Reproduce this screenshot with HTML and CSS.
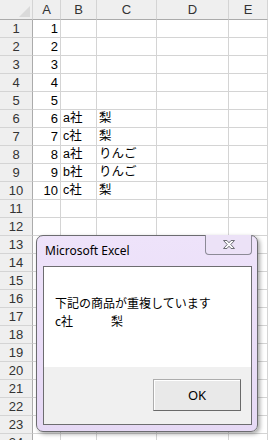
FILE: index.html
```html
<!DOCTYPE html>
<html lang="ja">
<head>
  <meta charset="UTF-8" />
  <title>Microsoft Excel</title>
  <link rel="stylesheet" href="styles.css">
</head>
<body>

  <div class="sheet">
    <div class="hd corner"></div><div class="hd">A</div><div class="hd">B</div><div class="hd">C</div><div class="hd">D</div><div class="hd">E</div>
    <div class="rh">1</div><div class="num">1</div><div></div><div></div><div></div><div></div>
    <div class="rh">2</div><div class="num">2</div><div></div><div></div><div></div><div></div>
    <div class="rh">3</div><div class="num">3</div><div></div><div></div><div></div><div></div>
    <div class="rh">4</div><div class="num">4</div><div></div><div></div><div></div><div></div>
    <div class="rh">5</div><div class="num">5</div><div></div><div></div><div></div><div></div>
    <div class="rh">6</div><div class="num">6</div><div class="txt">a社</div><div class="txt">梨</div><div></div><div></div>
    <div class="rh">7</div><div class="num">7</div><div class="txt">c社</div><div class="txt">梨</div><div></div><div></div>
    <div class="rh">8</div><div class="num">8</div><div class="txt">a社</div><div class="txt">りんご</div><div></div><div></div>
    <div class="rh">9</div><div class="num">9</div><div class="txt">b社</div><div class="txt">りんご</div><div></div><div></div>
    <div class="rh">10</div><div class="num">10</div><div class="txt">c社</div><div class="txt">梨</div><div></div><div></div>
    <div class="rh">11</div><div></div><div></div><div></div><div></div><div></div>
    <div class="rh">12</div><div></div><div></div><div></div><div></div><div></div>
    <div class="rh">13</div><div></div><div></div><div></div><div></div><div></div>
    <div class="rh">14</div><div></div><div></div><div></div><div></div><div></div>
    <div class="rh">15</div><div></div><div></div><div></div><div></div><div></div>
    <div class="rh">16</div><div></div><div></div><div></div><div></div><div></div>
    <div class="rh">17</div><div></div><div></div><div></div><div></div><div></div>
    <div class="rh">18</div><div></div><div></div><div></div><div></div><div></div>
    <div class="rh">19</div><div></div><div></div><div></div><div></div><div></div>
    <div class="rh">20</div><div></div><div></div><div></div><div></div><div></div>
    <div class="rh">21</div><div></div><div></div><div></div><div></div><div></div>
    <div class="rh">22</div><div></div><div></div><div></div><div></div><div></div>
    <div class="rh">23</div><div></div><div></div><div></div><div></div><div></div>
    <div class="rh">24</div><div></div><div></div><div></div><div></div><div></div>
  </div>

  <div class="dialog">
    <div class="titlebar">
      <span class="title">Microsoft Excel</span>
      <div class="close">
        <svg width="14" height="11" viewBox="0 0 14 11">
          <path d="M1.5 1.5h3.5l2 2.3 2-2.3h3.5l-3.7 4 3.7 4h-3.5l-2-2.3-2 2.3h-3.5l3.7-4z" fill="#fbfbfb" stroke="#6e6e76" stroke-width="1" stroke-linejoin="round"/>
        </svg>
      </div>
    </div>
    <div class="client">
      <div class="message">
        <p>下記の商品が重複しています</p>
        <p><span class="tab">c社</span>梨</p>
      </div>
      <div class="buttons">
        <button class="ok">OK</button>
      </div>
    </div>
  </div>

</body>
</html>
```

FILE: styles.css
```css
body {
  margin: 0;
  width: 268px;
  height: 440px;
  overflow: hidden;
  position: relative;
  background: #fff;
  font-family: "Liberation Sans", "Noto Sans CJK JP", sans-serif;
}

/* spreadsheet grid */
.sheet {
  display: grid;
  grid-template-columns: 33px 28px 36px 60px 72px 1fr;
  grid-template-rows: 20px;
  grid-auto-rows: 18px;
}
.sheet > div {
  box-sizing: border-box;
  border-right: 1px solid #d4d4d4;
  border-bottom: 1px solid #d4d4d4;
  font-size: 13px;
  line-height: 17px;
  white-space: nowrap;
  color: #000;
}
.sheet .hd {
  background: #efefef;
  border-bottom-color: #ababab;
  text-align: center;
  line-height: 19px;
  color: #333;
}
.sheet .rh {
  background: #efefef;
  border-right-color: #ababab;
  text-align: center;
  color: #333;
}
.sheet .corner {
  position: relative;
}
.sheet .corner::after {
  content: "";
  position: absolute;
  right: 2px;
  bottom: 2px;
  border-left: 11px solid transparent;
  border-bottom: 11px solid #dadada;
}
.sheet .num {
  text-align: right;
  padding-right: 2px;
}
.sheet .txt {
  padding-left: 2px;
  font-size: 12.5px;
}

/* message box */
.dialog {
  position: absolute;
  left: 36px;
  top: 235px;
  width: 222px;
  height: 197px;
  box-sizing: border-box;
  border: 1px solid #6c6c70;
  border-radius: 7px;
  background: linear-gradient(#eee3fa, #e6d9f5);
  box-shadow: 2px 2px 4px rgba(0, 0, 0, 0.35);
  padding: 0 5px 6px 6px;
  display: flex;
  flex-direction: column;
  font-family: "Noto Sans", "Noto Sans CJK JP", sans-serif;
}
.titlebar {
  height: 30px;
  position: relative;
  flex-shrink: 0;
}
.title {
  position: absolute;
  left: 2px;
  top: 7px;
  font-size: 12px;
  line-height: 16px;
  color: #000;
}
.close {
  position: absolute;
  right: 0;
  top: -1px;
  width: 47px;
  height: 20px;
  box-sizing: border-box;
  border: 1px solid #8c8a96;
  border-top: none;
  border-radius: 0 0 4px 4px;
  background: #ece2f7;
  display: flex;
  align-items: center;
  justify-content: center;
}
.client {
  flex: 1;
  border: 1px solid #6d6d70;
  background: #f0f0f0;
  display: flex;
  flex-direction: column;
}
.message {
  background: #fff;
  height: 100px;
  padding: 27px 0 0 11px;
  box-sizing: border-box;
  font-family: "Noto Sans CJK JP", sans-serif;
  font-size: 12px;
  line-height: 18px;
}
.message p {
  margin: 0;
}
.tab {
  display: inline-block;
  width: 56px;
}
.buttons {
  flex: 1;
  display: flex;
  justify-content: flex-end;
  align-items: flex-start;
  padding: 12px 10px 0 0;
}
.ok {
  width: 88px;
  height: 32px;
  box-sizing: border-box;
  background: #e9e9e9;
  border: 1px solid #adadad;
  border-right-color: #6a6a6a;
  border-bottom-color: #6a6a6a;
  box-shadow: inset 1px 1px 0 #fff;
  font-family: "Noto Sans", sans-serif;
  font-size: 13px;
  color: #000;
  padding: 0;
}
```
